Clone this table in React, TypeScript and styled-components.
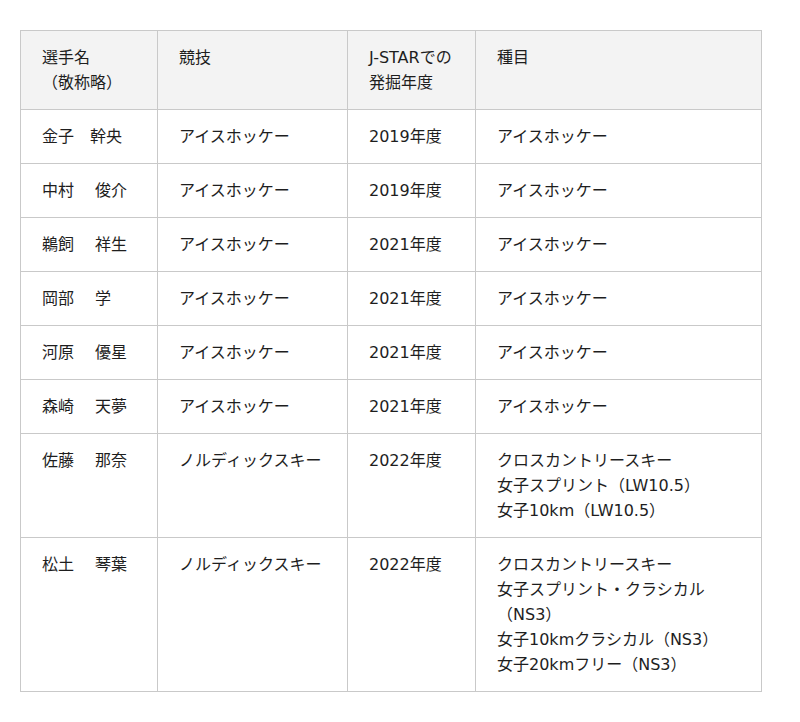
import styled, { createGlobalStyle } from "styled-components";

const GlobalStyle = createGlobalStyle`
  html, body {
    margin: 0;
    padding: 0;
    background: #ffffff;
  }
  body {
    font-family: "DejaVu Sans", "Noto Sans CJK JP", sans-serif;
    color: #1e1e1e;
  }
`;

const Page = styled.div`
  padding: 30px 20px 30px 20px;
`;

const Table = styled.table`
  width: 741px;
  border-collapse: collapse;
  table-layout: fixed;
  font-size: 16px;
  line-height: 25px;
`;

const HeadCell = styled.th<{ $w: number }>`
  box-sizing: border-box;
  width: ${(p) => p.$w}px;
  background: #f3f3f3;
  font-weight: normal;
  text-align: left;
  vertical-align: top;
  padding: 14px 21px 14px 21px;
  border: 1px solid #c9c9c9;
`;

const Cell = styled.td`
  box-sizing: border-box;
  text-align: left;
  vertical-align: top;
  padding: 14px 21px 14px 21px;
  border: 1px solid #c9c9c9;
`;

const Line = styled.div`
  white-space: nowrap;
`;

type Athlete = {
  name: string;
  sport: string;
  year: string;
  events: string[];
};

const athletes: Athlete[] = [
  { name: "金子　幹央", sport: "アイスホッケー", year: "2019年度", events: ["アイスホッケー"] },
  { name: "中村　 俊介", sport: "アイスホッケー", year: "2019年度", events: ["アイスホッケー"] },
  { name: "鵜飼　 祥生", sport: "アイスホッケー", year: "2021年度", events: ["アイスホッケー"] },
  { name: "岡部　 学", sport: "アイスホッケー", year: "2021年度", events: ["アイスホッケー"] },
  { name: "河原　 優星", sport: "アイスホッケー", year: "2021年度", events: ["アイスホッケー"] },
  { name: "森崎　 天夢", sport: "アイスホッケー", year: "2021年度", events: ["アイスホッケー"] },
  {
    name: "佐藤　 那奈",
    sport: "ノルディックスキー",
    year: "2022年度",
    events: ["クロスカントリースキー", "女子スプリント（LW10.5）", "女子10km（LW10.5）"],
  },
  {
    name: "松土　 琴葉",
    sport: "ノルディックスキー",
    year: "2022年度",
    events: [
      "クロスカントリースキー",
      "女子スプリント・クラシカル",
      "（NS3）",
      "女子10kmクラシカル（NS3）",
      "女子20kmフリー（NS3）",
    ],
  },
];

export default function App() {
  return (
    <>
      <GlobalStyle />
      <Page>
        <Table>
          <thead>
            <tr>
              <HeadCell $w={137}>
                <Line>選手名</Line>
                <Line>（敬称略）</Line>
              </HeadCell>
              <HeadCell $w={190}>競技</HeadCell>
              <HeadCell $w={128}>
                <Line>J-STARでの</Line>
                <Line>発掘年度</Line>
              </HeadCell>
              <HeadCell $w={286}>種目</HeadCell>
            </tr>
          </thead>
          <tbody>
            {athletes.map((a) => (
              <tr key={a.name}>
                <Cell>
                  <Line>{a.name}</Line>
                </Cell>
                <Cell>{a.sport}</Cell>
                <Cell>{a.year}</Cell>
                <Cell>
                  {a.events.map((e) => (
                    <Line key={e}>{e}</Line>
                  ))}
                </Cell>
              </tr>
            ))}
          </tbody>
        </Table>
      </Page>
    </>
  );
}
